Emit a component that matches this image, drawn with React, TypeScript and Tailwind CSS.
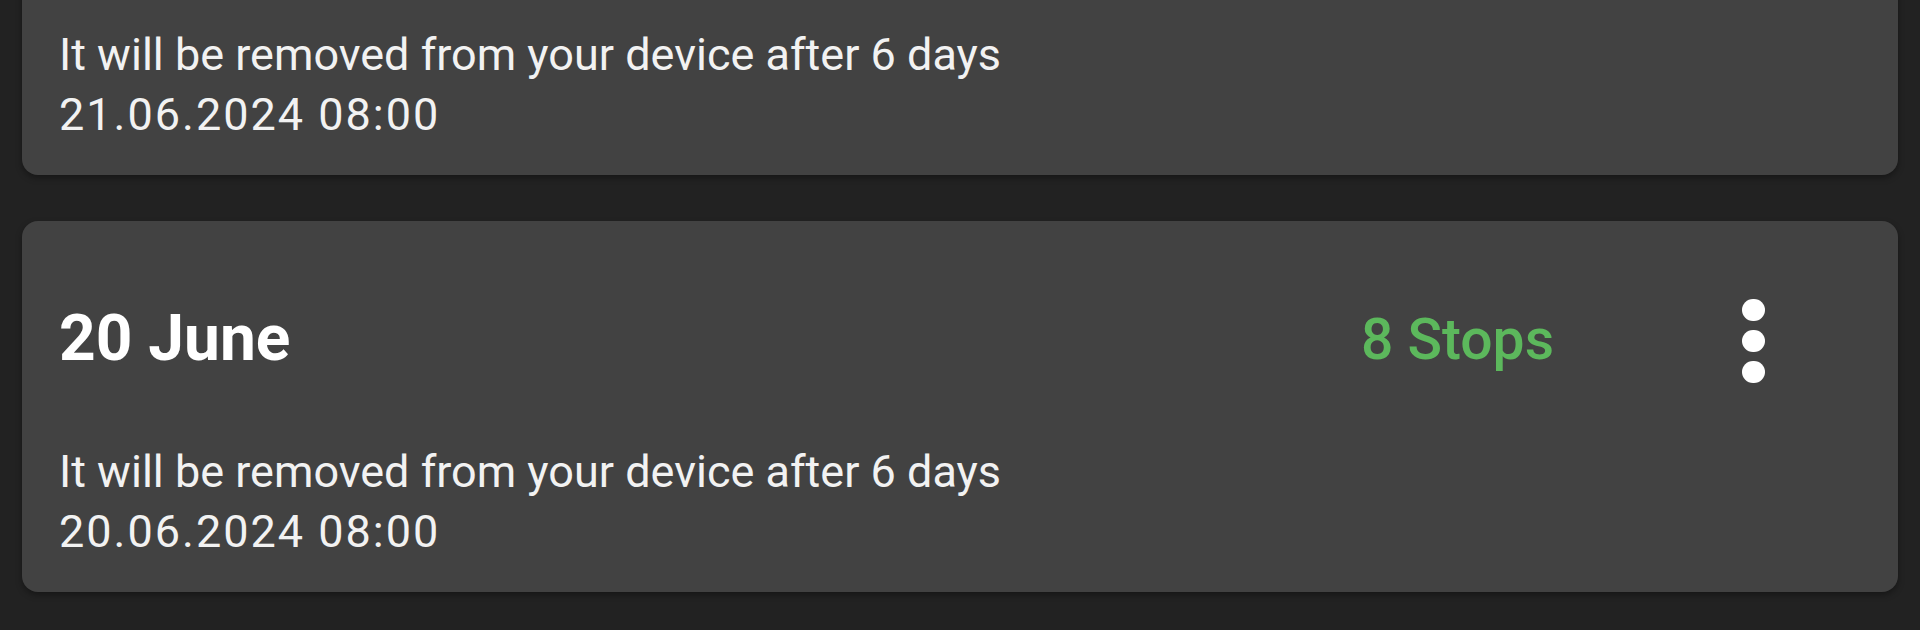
import React from 'react'

interface Trip {
  title: string
  stops: number
  date: string
}

const trips: Trip[] = [
  { title: '21 June', stops: 8, date: '21.06.2024 08:00' },
  { title: '20 June', stops: 8, date: '20.06.2024 08:00' },
]

function MoreDots() {
  return (
    <div className="flex flex-col items-center gap-[9px] mt-[3px]">
      <span className="block w-[23px] h-[22px] rounded-full bg-white" />
      <span className="block w-[23px] h-[22px] rounded-full bg-white" />
      <span className="block w-[23px] h-[22px] rounded-full bg-white" />
    </div>
  )
}

function TripCard({ trip }: { trip: Trip }) {
  return (
    <div className="rounded-[16px] bg-[#424242] shadow-[0_3px_6px_rgba(0,0,0,0.35)] pl-[37px] pr-[133px] pt-[78px] pb-[30px]">
      <div className="flex items-center h-[80px]">
        <h2 className="flex-1 text-[64px] font-bold text-white leading-none">{trip.title}</h2>
        <span className="text-[57px] font-medium text-[#5cb85c] leading-none">{trip.stops} Stops</span>
        <div className="ml-[188px]">
          <MoreDots />
        </div>
      </div>
      <div className="mt-[63px] text-[45px] leading-[60px] text-[#f2f2f2]">
        <p>It will be removed from your device after 6 days</p>
        <p className="tracking-[2px]">{trip.date}</p>
      </div>
    </div>
  )
}

export default function App() {
  return (
    <main
      className="w-[1920px] h-[630px] overflow-hidden bg-[#222222] px-[22px]"
      style={{ fontFamily: 'Roboto, "Noto Sans", sans-serif' }}
    >
      <div className="flex flex-col gap-[46px] -mt-[196px]">
        {trips.map((t) => (
          <TripCard key={t.date} trip={t} />
        ))}
      </div>
    </main>
  )
}
